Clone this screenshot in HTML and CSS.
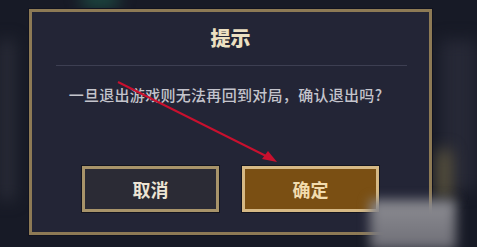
FILE: index.html
```html
<!DOCTYPE html>
<html lang="zh-CN">
<head>
  <meta charset="UTF-8" />
  <meta name="viewport" content="width=device-width, initial-scale=1" />
  <title>提示</title>
  <link rel="stylesheet" href="styles.css">
</head>
<body>

<!-- blurred game scene behind the dialog -->
<div class="blur blur-green"></div>
<div class="blur blur-left"></div>
<div class="blur blur-right"></div>
<div class="blur blur-gold"></div>

<div class="dialog">
  <h1 class="title">提示</h1>
  <div class="divider"></div>
  <p class="message">一旦退出游戏则无法再回到对局，确认退出吗?</p>
  <div class="actions">
    <button class="btn btn-cancel">取消</button>
    <button class="btn btn-ok">确定</button>
  </div>
</div>

<!-- annotation arrow drawn over the screenshot -->
<svg class="arrow" width="477" height="247" viewBox="0 0 477 247">
  <line x1="118" y1="82" x2="270" y2="158" stroke="#c8102e" stroke-width="2" />
  <path d="M277 162 L262 159 L268 151 Z" fill="#c8102e" />
</svg>

<div class="watermark"></div>

</body>
</html>
```

FILE: styles.css
```css
body {
  margin: 0;
  width: 477px;
  height: 247px;
  overflow: hidden;
  position: relative;
  background: #171a26;
  font-family: "Noto Sans CJK SC", "Noto Sans", sans-serif;
  padding-top: 9px;
  box-sizing: border-box;
}
.blur {
  position: absolute;
  filter: blur(8px);
}
.blur-green {
  left: 82px;
  top: -6px;
  width: 36px;
  height: 12px;
  background: #1f5a4a;
}
.blur-left {
  left: 0;
  top: 40px;
  width: 14px;
  height: 160px;
  background: #2c2e3a;
}
.blur-right {
  left: 440px;
  top: 40px;
  width: 37px;
  height: 150px;
  background: #262836;
}
.blur-gold {
  left: 438px;
  top: 150px;
  width: 12px;
  height: 50px;
  background: #6a6040;
}
.dialog {
  position: relative;
  margin-left: 29px;
  width: 403px;
  height: 226px;
  box-sizing: border-box;
  border: 3px solid #8d7a55;
  box-shadow: 0 0 0 1px #111320;
  background: #232536;
  display: flex;
  flex-direction: column;
  align-items: center;
}
.title {
  margin: 14px 0 0;
  font-size: 20px;
  line-height: 24px;
  font-weight: 900;
  color: #ece0c2;
}
.divider {
  align-self: stretch;
  margin: 15px 22px 0 24px;
  height: 1px;
  background: #3d3f52;
}
.message {
  margin: 19px 10px 0 0;
  font-size: 15px;
  line-height: 20px;
  letter-spacing: 0.3px;
  font-weight: 500;
  color: #c4c4cc;
}
.actions {
  display: flex;
  gap: 23px;
  margin-top: 61px;
}
.btn {
  width: 137px;
  height: 46px;
  font-family: inherit;
  font-size: 18px;
  font-weight: 700;
  box-shadow: 0 0 0 1px #14151e;
  cursor: pointer;
}
.btn-cancel {
  border: 3px solid #a8946a;
  background: #2b2b35;
  color: #ece4d4;
}
.btn-ok {
  border: 3px solid #d6b985;
  background: #7a4f13;
  color: #f2dcae;
}
.arrow {
  position: absolute;
  left: 0;
  top: 0;
}
.watermark {
  position: absolute;
  left: 370px;
  top: 200px;
  width: 86px;
  height: 50px;
  background: linear-gradient(180deg, #8c8c92, #6e6e76);
  filter: blur(6px);
}
```
